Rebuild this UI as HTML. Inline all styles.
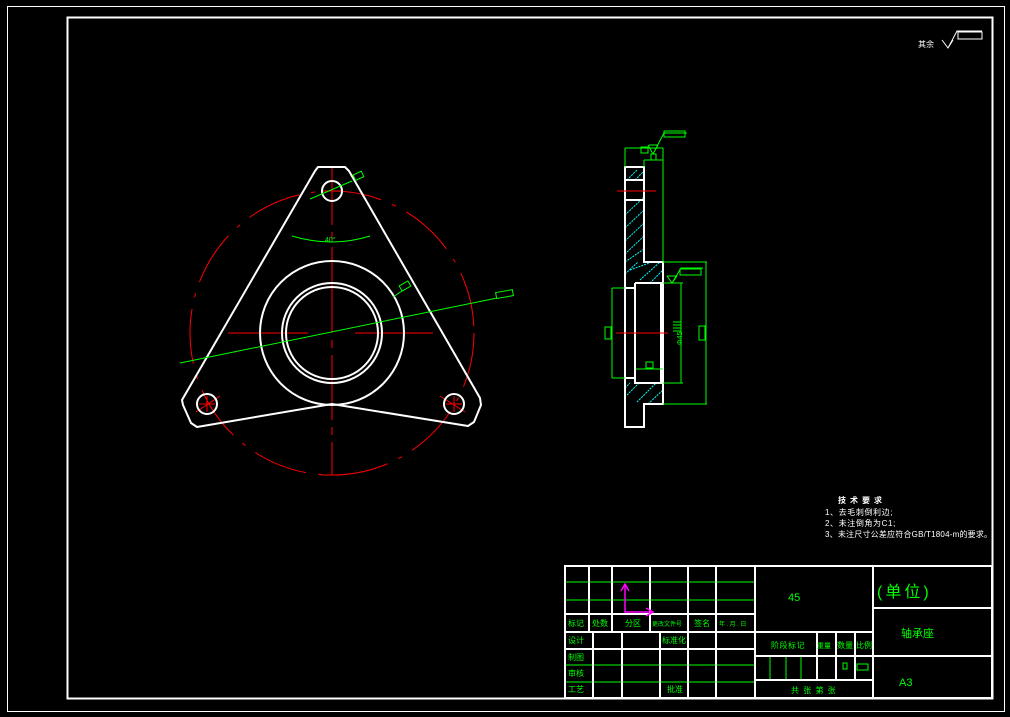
<!DOCTYPE html>
<html><head><meta charset="utf-8"><style>
html,body{margin:0;padding:0;background:#000;width:1010px;height:717px;overflow:hidden}
svg{display:block}
text{font-family:"Liberation Sans","Noto Sans CJK SC",sans-serif}
</style></head><body>
<svg width="1010" height="717" viewBox="0 0 1010 717" xmlns="http://www.w3.org/2000/svg">
<rect width="1010" height="717" fill="#000"/>
<rect x="7.5" y="6.5" width="997" height="705" fill="none" stroke="#fff" stroke-width="1"/>
<rect x="67.5" y="17.5" width="925" height="681" fill="none" stroke="#fff" stroke-width="2"/>

<text x="918" y="47" font-size="8" fill="#fff">其余</text>
<path d="M942 40 L948 48 L953 40 M948 48 L957 31 L982 31" fill="none" stroke="#fff" stroke-width="1"/>
<rect x="958" y="32" width="24" height="7" fill="none" stroke="#fff" stroke-width="1"/>

<g fill="none" stroke="#f00" stroke-width="1">
<circle cx="332" cy="333" r="142" stroke-dasharray="55,12,4,12"/>
<path d="M332 167 V225 M332 232 V240 M332 247 V333 M332 340 V348 M332 355 V420 M332 427 V435 M332 442 V475 M322 475 H342"/>
<path d="M228 333 H308 M355 333 H433"/>
<path d="M199 404 H215 M207 396 V412 M196 412 L220 396 M446 404 H462 M454 396 V412 M440 396 L465 412"/>
<path d="M322 191 H342"/>
</g>
<g fill="none" stroke="#fff" stroke-width="2">
<circle cx="332" cy="333" r="72"/>
<circle cx="332" cy="333" r="50"/>
<circle cx="332" cy="333" r="46"/>
<circle cx="332" cy="191" r="10"/>
<circle cx="207" cy="404" r="10"/>
<circle cx="454" cy="404" r="10"/>
<path d="M315 171 L318 167 H345 L349 171 L480 398 L481 405 L474 422 L468 426 L332 404 L197 427 L191 423 L183 405 L182 400 Z" stroke-linejoin="round"/>
</g>
<g fill="none" stroke="#0f0" stroke-width="1">
<path d="M180 363 L497 298"/>
<rect x="496" y="291" width="17" height="6" transform="rotate(-10 505 294)"/>
<path d="M310 199 L352 181"/>
<rect x="354" y="173" width="9" height="6" transform="rotate(-25 358 176)"/>
<path d="M393 297 L402 291"/>
<rect x="400" y="283" width="10" height="6" transform="rotate(-30 405 286)"/>
<path d="M292 236 Q332 248 370 236"/>
</g>
<text x="325" y="242" font-size="7" fill="#0f0">40°</text>

<g stroke="#0ff" stroke-width="1" stroke-dasharray="2,1">
<path d="M627 180 L637 170 M635 180 L644 171"/>
<path d="M625 215 L644 197 M625 228 L644 210 M625 241 L644 223 M625 254 L644 236 M625 262 L644 249 M630 270 L652 262 M640 280 L660 262 M650 283 L663 270 M625 274 L638 262"/>
<path d="M627 395 L639 383 M637 402 L656 383 M648 404 L663 390 M625 388 L630 383"/>
</g>
<g fill="none" stroke="#fff" stroke-width="2">
<path d="M625 167 H644 V262 H663 V404 H644 V427 H625 Z"/>
<path d="M625 180 H644 M625 200 H644"/>
<path d="M635 283 H663 M635 283 V383 H663 M625 288 H635 M625 378 H635"/>
<path d="M661 283 V383"/>
</g>
<path d="M616 333 H668 M617 191 H656" stroke="#f00" stroke-width="1"/>
<g fill="none" stroke="#0f0" stroke-width="1">
<path d="M625 148 V167 M625 148 H663 M663 148 V262 M644 160 V167 M644 160 H663"/>
<rect x="641" y="147" width="7" height="6"/>
<rect x="651" y="154" width="5" height="6"/>
<path d="M648 145 L653 154 L658 145 M649 145 H658 M653 154 L664 133 H687"/>
<rect x="664" y="131" width="21" height="6"/>
<path d="M663 262 H707 M706 262 V404 M663 404 H707"/>
<rect x="699" y="326" width="6" height="14"/>
<path d="M663 283 H683 M663 383 H683 M681 283 V383"/>
<path d="M612 288 H625 M612 378 H625 M612 288 V378"/>
<rect x="605" y="327" width="6" height="12"/>
<path d="M667 276 L672 283 L677 276 M667 276 H677 M672 283 L681 268 H703"/>
<rect x="680" y="269" width="21" height="6"/>
<rect x="646" y="362" width="7" height="6"/>
<path d="M636 369 H663"/>
</g>
<g stroke="#0f0" stroke-width="1"><path d="M673 322 H681 M673 325 H681 M673 328 H681 M673 331 H681"/></g>
<text x="0" y="0" font-size="7" fill="#0f0" transform="translate(682,345) rotate(-90)">Φ45</text>

<g fill="#fff" font-size="8">
<text x="838" y="503" letter-spacing="4" font-weight="bold">技术要求</text>
<text x="825" y="515" letter-spacing="0.6">1、去毛刺倒利边;</text>
<text x="825" y="526" letter-spacing="0.6">2、未注倒角为C1;</text>
<text x="825" y="537" letter-spacing="0.2">3、未注尺寸公差应符合GB/T1804-m的要求。</text>
</g>

<g fill="none" stroke="#0f0" stroke-width="1">
<path d="M565 582 H755 M565 600 H755 M565 665 H755 M565 682 H755"/>
<path d="M770 656 V680 M786 656 V680 M801 656 V680"/>
<rect x="843" y="663" width="4" height="6"/>
<rect x="857" y="664" width="11" height="6"/>
</g>
<g fill="none" stroke="#fff" stroke-width="2">
<rect x="565" y="566" width="427" height="132"/>
<path d="M589 566 V632 M612 566 V632 M650 566 V632 M688 566 V632 M716 566 V698 M755 566 V698 M873 566 V698"/>
<path d="M565 614 H755 M565 632 H755 M565 649 H755"/>
<path d="M593 632 V698 M622 632 V698 M660 632 V698 M688 632 V698"/>
<path d="M755 632 H873 M755 656 H873 M755 680 H873 M817 632 V680 M836 632 V680 M855 632 V680"/>
<path d="M873 608 H992 M873 656 H992"/>
</g>
<path d="M625 584 V612 H652 M621 591 L625 584 L629 591 M646 608 L653 612 L646 616" fill="none" stroke="#f0f" stroke-width="1.5"/>
<g fill="#0f0" font-size="8">
<text x="568" y="626">标记</text>
<text x="592" y="626">处数</text>
<text x="625" y="626">分区</text>
<text x="652" y="626" font-size="6">更改文件号</text>
<text x="694" y="626">签名</text>
<text x="719" y="626" font-size="6" letter-spacing="1.5">年.月.日</text>
<text x="568" y="643">设计</text>
<text x="662" y="643">标准化</text>
<text x="568" y="660">制图</text>
<text x="568" y="676">审核</text>
<text x="568" y="692">工艺</text>
<text x="667" y="692">批准</text>
<text x="771" y="648" letter-spacing="0.5">阶段标记</text>
<text x="817" y="648" font-size="7">重量</text>
<text x="837" y="648">数量</text>
<text x="856" y="648">比例</text>
<text x="791" y="693" letter-spacing="1">共 张 第 张</text>
<text x="788" y="601" font-size="11">45</text>
<text x="899" y="686" font-size="11">A3</text>
<text x="901" y="637" font-size="11">轴承座</text>
<text x="877" y="597" font-size="16" letter-spacing="3">(单位)</text>
</g>
</svg>
</body></html>
